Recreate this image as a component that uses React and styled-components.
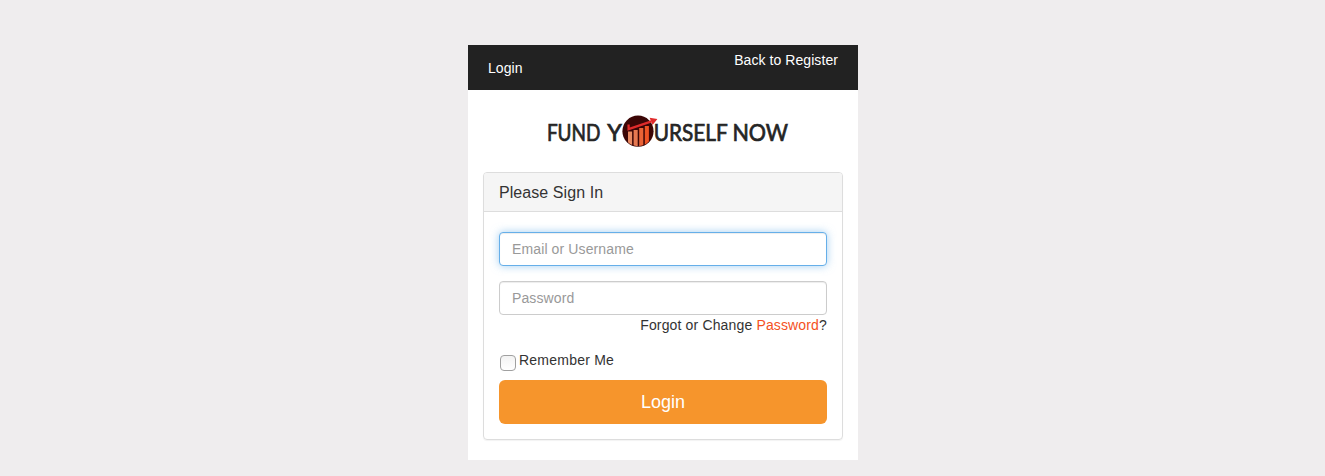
import React from "react";
import styled, { createGlobalStyle } from "styled-components";

const GlobalStyle = createGlobalStyle`
  *, *::before, *::after { box-sizing: border-box; }
  body {
    margin: 0;
    background: #efedee;
    color: #333;
    font: 14px/20px "Liberation Sans", Arial, sans-serif;
  }
`;

const Page = styled.main`
  display: flex;
  justify-content: center;
  padding-top: 45px;
`;

const Card = styled.section`
  width: 390px;
  height: 415px;
  margin-left: 1px;
  background: #fff;
`;

const TopBar = styled.header`
  display: flex;
  justify-content: space-between;
  align-items: flex-start;
  height: 45px;
  padding: 5px 20px;
  background: #222;
  color: #fff;
  letter-spacing: 0.07px;
`;

const BarTitle = styled.span`
  margin-top: 8px;
`;

const BarLink = styled.a`
  color: #fff;
`;

const LogoRow = styled.div`
  display: flex;
  justify-content: center;
  height: 82px;
  padding: 21px 0 0 10px;
`;

const LogoWord = styled.text`
  font-family: Lato, sans-serif;
  font-size: ${(p) => p.$size || 22.6}px;
  fill: #252525;
  stroke: #252525;
  stroke-width: 0.7px;
`;

const Panel = styled.div`
  margin: 0 15px;
  height: 268px;
  border: 1px solid #ddd;
  border-radius: 4px;
  box-shadow: 0 1px 1px rgba(0, 0, 0, 0.05);
`;

const PanelHeading = styled.h1`
  height: 39px;
  margin: 0;
  padding: 11px 15px 9px;
  border-bottom: 1px solid #ddd;
  border-radius: 3px 3px 0 0;
  background: #f5f5f5;
  font-size: 16px;
  font-weight: 400;
  line-height: 18px;
  letter-spacing: 0.07px;
`;

const Form = styled.form`
  display: flex;
  flex-direction: column;
  padding: 20px 15px 15px;
`;

const Field = styled.input`
  width: 100%;
  height: 34px;
  margin: 0 0 ${(p) => (p.$active ? "15px" : "0")};
  padding: 6px 12px;
  border: 1px solid ${(p) => (p.$active ? "#66afe9" : "#ccc")};
  border-radius: 4px;
  outline: 0;
  background: #fff;
  color: #555;
  font: inherit;
  letter-spacing: 0.12px;
  box-shadow: inset 0 1px 1px rgba(0, 0, 0, 0.075)
    ${(p) => (p.$active ? ", 0 0 8px rgba(102, 175, 233, 0.6)" : "")};
  &::placeholder { color: #999; opacity: 1; }
`;

const Forgot = styled.div`
  text-align: right;
  letter-spacing: 0.15px;
`;

const Accent = styled.a`
  color: #f4511e;
`;

const Remember = styled.label`
  display: flex;
  align-items: flex-start;
  gap: 3px;
  height: 30px;
  margin-top: 15px;
  padding-left: 1px;
  letter-spacing: 0.23px;
`;

const Checkbox = styled.input`
  appearance: none;
  width: 16px;
  height: 16px;
  margin: 5px 0 0;
  border: 1px solid #a0a0a0;
  border-radius: 4px;
  background: linear-gradient(#f3f3f3, #fff);
`;

const Submit = styled.button`
  height: 44px;
  border: 0;
  border-radius: 6px;
  background: #f6952c;
  color: #fff;
  font: 18px/24px "Liberation Sans", Arial, sans-serif;
`;

const bars = [
  { x: 82, top: 20.5, color: "#e98a62" },
  { x: 87.6, top: 19, color: "#e67850" },
  { x: 93.2, top: 17, color: "#ea6336" },
  { x: 98.8, top: 15, color: "#ef5324" },
];

function Logo() {
  return (
    <svg width="244" height="40" viewBox="0 0 244 40" overflow="visible" role="img" aria-label="Fund Yourself Now">
      <defs>
        <clipPath id="disc"><circle cx="92" cy="20.2" r="15" /></clipPath>
      </defs>
      <LogoWord x="0.9" y="29.9" textLength="53.6" lengthAdjust="spacingAndGlyphs">FUND</LogoWord>
      <LogoWord x="61.2" y="29.9" textLength="14.6" lengthAdjust="spacingAndGlyphs">Y</LogoWord>
      <circle cx="92" cy="20.2" r="15.6" fill="#3b0606" />
      <g clipPath="url(#disc)">
        {bars.map((b) => (
          <rect key={b.x} x={b.x} y={b.top} width="4.1" height="24" fill={b.color} />
        ))}
      </g>
      <path d="M82.6 13.5v4.6L105.5 10.3" fill="none" stroke="#e02b2b" strokeWidth="2.3" />
      <path d="M103.6 6.8l7.8 1.2-4.8 6z" fill="#e02b2b" />
      <LogoWord x="107.7" y="29.9" textLength="74" lengthAdjust="spacingAndGlyphs">URSELF</LogoWord>
      <LogoWord x="186.4" y="29.9" textLength="55.6" lengthAdjust="spacingAndGlyphs">NOW</LogoWord>
    </svg>
  );
}

export default function App() {
  return (
    <>
      <GlobalStyle />
      <Page>
        <Card>
          <TopBar>
            <BarTitle>Login</BarTitle>
            <BarLink>Back to Register</BarLink>
          </TopBar>
          <LogoRow><Logo /></LogoRow>
          <Panel>
            <PanelHeading>Please Sign In</PanelHeading>
            <Form onSubmit={(e) => e.preventDefault()}>
              <Field $active type="text" placeholder="Email or Username" />
              <Field type="password" placeholder="Password" />
              <Forgot>Forgot or Change <Accent>Password</Accent>?</Forgot>
              <Remember><Checkbox type="checkbox" />Remember Me</Remember>
              <Submit>Login</Submit>
            </Form>
          </Panel>
        </Card>
      </Page>
    </>
  );
}
